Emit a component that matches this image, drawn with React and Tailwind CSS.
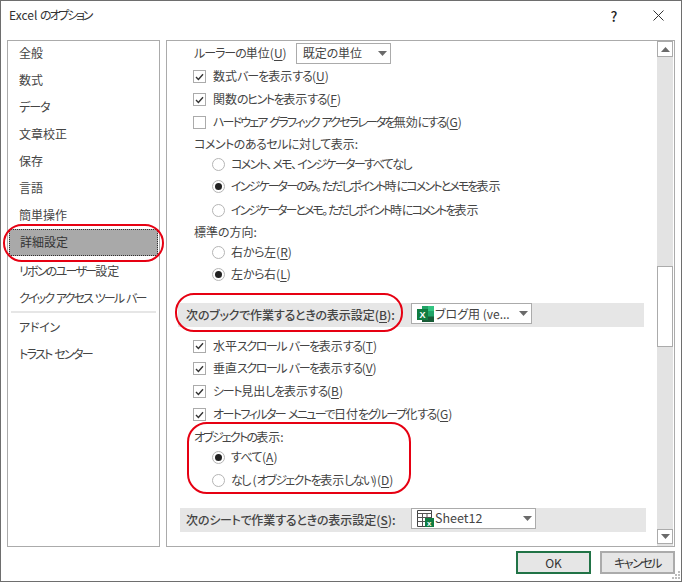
import React from "react";

const U = ({ c }) => <span className="underline underline-offset-2">{c}</span>;

/* Narrow kana runs to the width Meiryo UI gives them; kanji, punctuation, spaces and Latin stay as they are. */
const T = ({ k, t, u, end = ")" }) => (
  <>
    {t.split(/([\u3041-\u30ff]+)/).map((p, i) =>
      i % 2 ? (
        <span key={i} className={k}>{p}</span>
      ) : (
        <span key={i} className="whitespace-pre">{p}</span>
      )
    )}
    {u && (
      <>
        (<U c={u} />{end}
      </>
    )}
  </>
);

const Check = ({ on }) => (
  <span className="w-[13px] h-[13px] border border-[#ababab] bg-white shrink-0 flex items-center justify-center">
    {on && (
      <svg width="9" height="8" viewBox="0 0 9 8" fill="none">
        <path d="M1 4 L3.4 6.4 L8 1.2" stroke="#333" strokeWidth="1.4" />
      </svg>
    )}
  </span>
);

const Radio = ({ on }) => (
  <span className="w-[13px] h-[13px] rounded-full border border-[#b5b5b5] bg-white shrink-0 flex items-center justify-center">
    {on && <span className="w-[7px] h-[7px] rounded-full bg-[#222]" />}
  </span>
);

const Arrow = () => (
  <svg width="9" height="5" viewBox="0 0 9 5" className="shrink-0">
    <path d="M0 0 H9 L4.5 5 Z" fill="#6a6a6a" />
  </svg>
);

const CheckRow = ({ h, on, children }) => (
  <div style={{ height: h }} className="flex items-center pl-[26px] gap-[7px] shrink-0">
    <Check on={on} />
    <span className="whitespace-nowrap pb-[1px]">{children}</span>
  </div>
);

const RadioRow = ({ h, on, children }) => (
  <div style={{ height: h }} className="flex items-center pl-[45px] gap-[6px] shrink-0">
    <Radio on={on} />
    <span className="whitespace-nowrap pb-[1px]">{children}</span>
  </div>
);

const Label = ({ h, children }) => (
  <div style={{ height: h }} className="flex items-center pl-[27px] shrink-0 whitespace-nowrap">
    {children}
  </div>
);

const ExcelIcon = () => (
  <svg width="17" height="16" viewBox="0 0 17 16" className="shrink-0">
    <rect x="5" y="0" width="12" height="16" fill="#21a366" />
    <rect x="11" y="0" width="6" height="5" fill="#33c481" />
    <rect x="5" y="5" width="6" height="5.5" fill="#107c41" />
    <rect x="11" y="10.5" width="6" height="5.5" fill="#185c37" />
    <rect x="5" y="10.5" width="6" height="5.5" fill="#185c37" />
    <rect x="0" y="3" width="11" height="11" fill="#107c41" />
    <text x="2.6" y="12" fontSize="9" fontWeight="700" fill="#fff" fontFamily="Liberation Sans, sans-serif">X</text>
  </svg>
);

const SheetIcon = () => (
  <svg width="17" height="17" viewBox="0 0 17 17" className="shrink-0">
    <path d="M0.5 0.5 H14.5 V16.5 H0.5 Z" fill="#fff" stroke="#444" />
    <path d="M0.5 3.5 H14.5 M0.5 7.5 H14.5 M0.5 11.5 H14.5 M5.5 3.5 V16.5 M10 3.5 V16.5" stroke="#555" fill="none" />
    <rect x="8" y="8" width="9" height="9" fill="#107c41" />
    <text x="10" y="15.5" fontSize="8" fontWeight="700" fill="#fff" fontFamily="Liberation Sans, sans-serif">x</text>
  </svg>
);

const Band = ({ ml, label, combo }) => (
  <div className="h-[24px] w-[466px] shrink-0 bg-[#e6e6e6] flex items-start" style={{ marginLeft: ml }}>
    {label}
    {combo}
  </div>
);

const row = "flex items-center pl-[11px] whitespace-nowrap";

export default function App() {
  return (
    <div className="relative w-[682px] h-[582px] bg-white border border-[#6e6e6e] text-[12px] text-[#444] leading-none [font-family:'Noto_Sans_CJK_JP',sans-serif] [font-feature-settings:'palt'] overflow-hidden">
      {/* title bar */}
      <div className="h-[39px] flex items-start">
        <div className="pl-[8px] pt-[8px] text-[#333] flex-1">
          <T k="tracking-[-2.2px]" t="Excel のオプション" />
        </div>
        <div className="w-[20px] mt-[8px] mr-[29px] text-[14px] font-medium text-[#222] text-center">?</div>
        <svg width="11" height="11" viewBox="0 0 11 11" className="mt-[9px] mr-[17px]">
          <path d="M0.5 0.5 L10.5 10.5 M10.5 0.5 L0.5 10.5" stroke="#333" strokeWidth="1" />
        </svg>
      </div>

      {/* main */}
      <div className="flex gap-[6px] pl-[6px] h-[507px]">
        <div className="w-[153px] border border-[#ababab] flex flex-col shrink-0">
          <div className={`h-[26px] pb-[2px] ${row}`}>全般</div>
          <div className={`h-[27px] pb-[2px] ${row}`}>数式</div>
          <div className={`h-[27px] pb-[2px] ${row}`}><T k="tracking-[-1px]" t="データ" /></div>
          <div className={`h-[27px] pb-[2px] ${row}`}>文章校正</div>
          <div className={`h-[27px] pb-[2px] ${row}`}>保存</div>
          <div className={`h-[27px] pb-[2px] ${row}`}>言語</div>
          <div className={`h-[27px] pb-[2px] ${row}`}>簡単操作</div>
          <div className="h-[27px] mx-[1px] pl-[10px] pb-[2px] flex items-center bg-[#a9a9a9] border border-dotted border-[#333] text-[#333]">詳細設定</div>
          <div className={`h-[28px] pt-[1px] ${row}`}><T k="tracking-[-1.75px]" t="リボンのユーザー" />設定</div>
          <div className={`h-[27px] ${row}`}><T k="tracking-[-1.85px]" t="クイック アクセス ツール バー" /></div>
          <div className="h-[2px] mx-[3px] bg-[#e6e6e6] shrink-0" />
          <div className={`h-[27px] ${row}`}><T k="tracking-[-0.25px]" t="アドイン" /></div>
          <div className={`h-[27px] ${row}`}><T k="tracking-[-1.7px]" t="トラスト センター" /></div>
        </div>

        <div className="w-[509px] border border-[#ababab] flex shrink-0 overflow-hidden">
          <div className="flex-1 flex flex-col overflow-hidden min-w-0">
            <div className="h-[24px] shrink-0 flex items-center pl-[27px]">
              <span className="whitespace-nowrap"><T k="tracking-[-1px]" t="ルーラーの単位" u="U" /></span>
              <div className="ml-[9px] w-[95px] h-[21px] border border-[#ababab] flex items-center justify-between pl-[6px] pr-[3px]">
                <span><T k="tracking-[-0.3px]" t="既定の単位" /></span>
                <Arrow />
              </div>
            </div>
            <CheckRow h={23} on><T k="tracking-[-1px]" t="数式バーを表示する" u="U" /></CheckRow>
            <CheckRow h={23} on><T k="tracking-[-1.4px]" t="関数のヒントを表示する" u="F" /></CheckRow>
            <CheckRow h={22}><T k="tracking-[-1.85px]" t="ハードウェア グラフィック アクセラレータを無効にする" u="G" /></CheckRow>
            <Label h={21}><T k="tracking-[-0.5px]" t="コメントのあるセルに対して表示:" /></Label>
            <RadioRow h={20}><T k="tracking-[-1.6px]" t="コメント、メモ、インジケーターすべてなし" /></RadioRow>
            <RadioRow h={25} on><T k="tracking-[-1.87px]" t="インジケーターのみ。ただしポイント時にコメントとメモを表示" /></RadioRow>
            <RadioRow h={22}><T k="tracking-[-1.98px]" t="インジケーターとメモ。ただしポイント時にコメントを表示" /></RadioRow>
            <Label h={22}>標準の方向:</Label>
            <RadioRow h={19}><T k="tracking-[-0.5px]" t="右から左" u="R" /></RadioRow>
            <RadioRow h={25} on><T k="tracking-[-0.5px]" t="左から右" u="L" /></RadioRow>
            <div className="h-[16px] shrink-0" />
            <Band
              ml={11}
              label={
                <span className="pl-[8px] w-[233px] h-[24px] flex items-center font-medium whitespace-nowrap">
                  <span><T k="tracking-[-0.3px]" t="次のブックで作業するときの表示設定" u="B" end="):" /></span>
                </span>
              }
              combo={
                <div className="w-[121px] h-[21px] border border-[#ababab] bg-white flex items-center pl-[5px] pr-[3px] gap-[1px]">
                  <ExcelIcon />
                  <span className="flex-1 whitespace-nowrap">ブログ用 (ve...</span>
                  <Arrow />
                </div>
              }
            />
            <div className="h-[8px] shrink-0" />
            <CheckRow h={22} on><T k="tracking-[-1.43px]" t="水平スクロール バーを表示する" u="T" /></CheckRow>
            <CheckRow h={23} on><T k="tracking-[-1.43px]" t="垂直スクロール バーを表示する" u="V" /></CheckRow>
            <CheckRow h={23} on><T k="tracking-[-1.3px]" t="シート見出しを表示する" u="B" /></CheckRow>
            <CheckRow h={23} on><T k="tracking-[-1.57px]" t="オートフィルター メニューで日付をグループ化する" u="G" /></CheckRow>
            <Label h={21}><T k="tracking-[-1.8px]" t="オブジェクトの表示:" /></Label>
            <RadioRow h={21} on><T k="tracking-[-0.6px]" t="すべて" u="A" /></RadioRow>
            <RadioRow h={24}><T k="tracking-[-1.53px]" t="なし (オブジェクトを表示しない)" u="D" /></RadioRow>
            <div className="h-[16px] shrink-0" />
            <Band
              ml={13}
              label={
                <span className="pl-[6px] w-[231px] h-[24px] pb-[1px] flex items-center font-medium whitespace-nowrap">
                  <span><T k="tracking-[-0.3px]" t="次のシートで作業するときの表示設定" u="S" end="):" /></span>
                </span>
              }
              combo={
                <div className="w-[125px] h-[21px] border border-[#ababab] bg-white flex items-center pl-[5px] pr-[3px] gap-[1px]">
                  <SheetIcon />
                  <span className="flex-1 whitespace-nowrap text-[12.5px]">Sheet12</span>
                  <Arrow />
                </div>
              }
            />
            <div className="h-[11px] shrink-0" />
            <CheckRow h={22}><T k="tracking-[-1px]" t="行列番号を表示する" u="H" /></CheckRow>
          </div>

          {/* scrollbar */}
          <div className="w-[16px] mr-[1px] shrink-0 bg-[#e3e3e3] flex flex-col">
            <div className="h-[16px] border border-[#ababab] bg-white flex items-center justify-center shrink-0">
              <svg width="9" height="5" viewBox="0 0 9 5"><path d="M0 5 H9 L4.5 0 Z" fill="#6a6a6a" /></svg>
            </div>
            <div className="h-[209px] shrink-0" />
            <div className="h-[81px] border border-[#ababab] bg-white shrink-0" />
            <div className="flex-1" />
            <div className="h-[15px] mb-[2px] border border-[#ababab] bg-white flex items-center justify-center shrink-0">
              <Arrow />
            </div>
          </div>
        </div>
      </div>

      {/* footer */}
      <div className="flex justify-end gap-[9px] pt-[4px] pr-[6px]">
        <button className="w-[75px] h-[23px] border-[2px] border-[#217346] bg-[#e6e6e6] text-[#333] text-[12px]">OK</button>
        <button className="w-[75px] h-[23px] border-[2px] border-[#ababab] bg-[#e6e6e6] text-[#333] text-[12px]"><T k="tracking-[-1.5px]" t="キャンセル" /></button>
      </div>

      {/* resize grip */}
      <svg width="9" height="9" viewBox="0 0 9 9" className="absolute right-0 bottom-[1px]">
        <path d="M6 0h2v2H6z M3 3h2v2H3z M6 3h2v2H6z M0 6h2v2H0z M3 6h2v2H3z M6 6h2v2H6z" fill="#bdbdbd" />
      </svg>

      {/* red annotations */}
      <div className="absolute left-[2px] top-[223px] w-[161px] h-[38px] rounded-[19px] border-[2px] border-[#e60012] pointer-events-none" />
      <div className="absolute left-[174px] top-[292px] w-[228px] h-[39px] rounded-[19px] border-[2px] border-[#e60012] pointer-events-none" />
      <div className="absolute left-[186px] top-[421px] w-[224px] h-[72px] rounded-[20px] border-[2px] border-[#e60012] pointer-events-none" />
    </div>
  );
}
